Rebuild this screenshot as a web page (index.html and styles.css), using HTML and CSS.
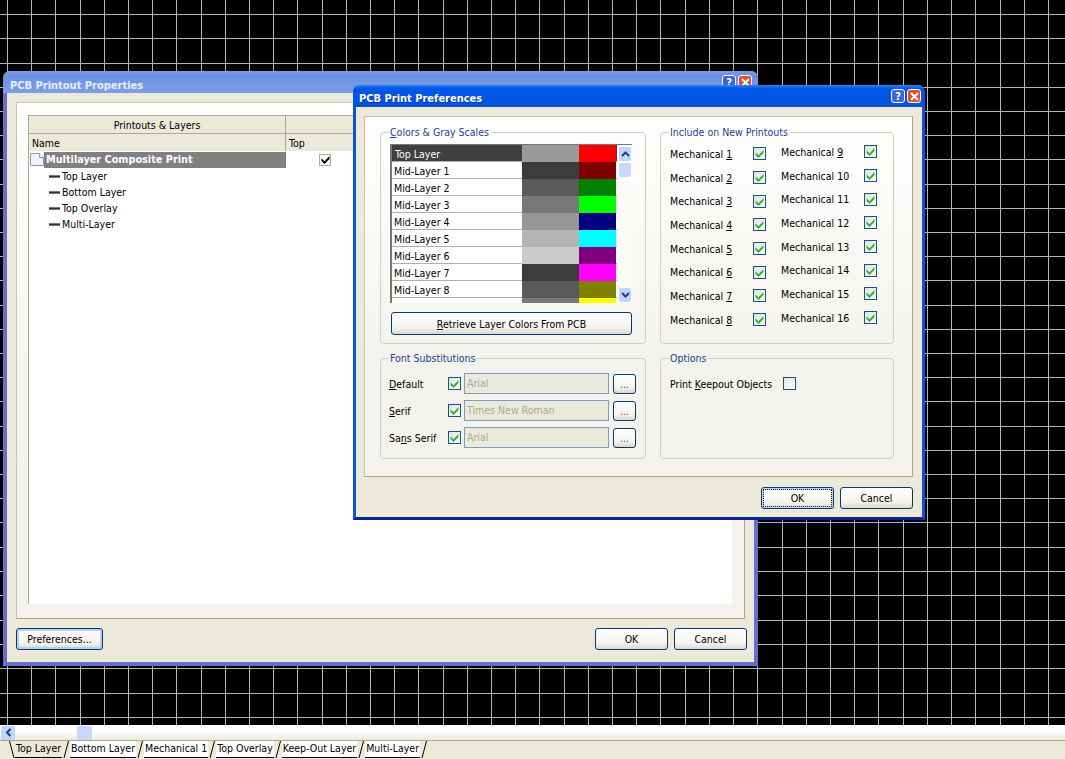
FILE: index.html
```html
<!DOCTYPE html>
<html>
<head>
    <meta charset="utf-8">
    <title>PCB Print Preferences</title>
    <link rel="stylesheet" href="styles.css">
</head>
<body>
    <svg width="0" height="0" class="defs">
        <symbol id="check" viewBox="0 0 9 9"><path d="M.5 3.500l3 2.800L8.500 1v3L3.500 9 .5 6z" fill="currentColor"/></symbol>
    </svg>

    <main class="canvas">
        <svg class="grid" width="1065" height="725">
            <path d="M7.5 0V725M31.5 0V725M55.5 0V725M80.5 0V725M104.5 0V725M128.5 0V725M152.5 0V725M176.5 0V725M201.5 0V725M225.5 0V725M249.5 0V725M273.5 0V725M297.5 0V725M322.5 0V725M346.5 0V725M370.5 0V725M394.5 0V725M418.5 0V725M443.5 0V725M467.5 0V725M491.5 0V725M515.5 0V725M539.5 0V725M564.5 0V725M588.5 0V725M612.5 0V725M636.5 0V725M660.5 0V725M685.5 0V725M709.5 0V725M733.5 0V725M757.5 0V725M782.5 0V725M806.5 0V725M830.5 0V725M854.5 0V725M878.5 0V725M903.5 0V725M927.5 0V725M951.5 0V725M975.5 0V725M1000.5 0V725M1024.5 0V725M1048.5 0V725" stroke="#b4b4b0" fill="none"/>
            <path d="M0 14.5H1065M0 38.5H1065M0 63.5H1065M0 87.5H1065M0 111.5H1065M0 135.5H1065M0 159.5H1065M0 184.5H1065M0 208.5H1065M0 232.5H1065M0 256.5H1065M0 280.5H1065M0 305.5H1065M0 329.5H1065M0 353.5H1065M0 377.5H1065M0 401.5H1065M0 426.5H1065M0 450.5H1065M0 474.5H1065M0 498.5H1065M0 522.5H1065M0 547.5H1065M0 571.5H1065M0 595.5H1065M0 620.5H1065M0 644.5H1065M0 668.5H1065M0 693.5H1065M0 717.5H1065" stroke="#b4b4b0" fill="none"/>
        </svg>

        <section class="window window-back">
            <header class="titlebar">
                <h1>PCB Printout Properties</h1>
                <div class="title-buttons">
                    <span class="title-btn -help">?</span>
                    <span class="title-btn -close"><svg width="9" height="9" viewBox="0 0 9 9"><path d="M1 1l7 7M8 1L1 8" stroke="#fff" stroke-width="2"/></svg></span>
                </div>
            </header>
            <div class="window-body">
                <div class="panel panel-tree">
                    <div class="tree">
                        <div class="tree-head">
                            <div class="head-cell -center">Printouts &amp; Layers</div>
                            <div class="head-cell"></div>
                            <div class="head-cell">Name</div>
                            <div class="head-cell">Top</div>
                        </div>
                        <div class="tree-row -print">
                            <svg class="doc-icon" width="14" height="13" viewBox="0 0 14 13"><path d="M.5.5h9l4 4v8H.5z" fill="#eef2fa" stroke="#8f99ad"/><path d="M9.500.5v4h4" fill="#fff" stroke="#8f99ad"/></svg>
                            <span class="print-name">Multilayer Composite Print</span>
                            <span class="top-check"><svg width="9" height="9"><use href="#check"/></svg></span>
                        </div>
                        <div class="tree-row"><i class="layer-dash"></i>Top Layer</div>
                        <div class="tree-row"><i class="layer-dash"></i>Bottom Layer</div>
                        <div class="tree-row"><i class="layer-dash"></i>Top Overlay</div>
                        <div class="tree-row"><i class="layer-dash"></i>Multi-Layer</div>
                    </div>
                </div>
                <footer class="window-foot">
                    <button class="btn -default btn-prefs">Preferences...</button>
                    <span class="spacer"></span>
                    <button class="btn">OK</button>
                    <button class="btn">Cancel</button>
                </footer>
            </div>
        </section>

        <section class="window window-front">
            <header class="titlebar">
                <h1>PCB Print Preferences</h1>
                <div class="title-buttons">
                    <span class="title-btn -help">?</span>
                    <span class="title-btn -close"><svg width="9" height="9" viewBox="0 0 9 9"><path d="M1 1l7 7M8 1L1 8" stroke="#fff" stroke-width="2"/></svg></span>
                </div>
            </header>
            <div class="window-body">
                <div class="panel panel-prefs">
                    <fieldset class="group group-colors">
                        <legend><u>C</u>olors &amp; Gray Scales</legend>
                        <div class="layer-list">
                            <div class="layer-rows">
                                <div class="layer-row -selected"><span class="layer-name">Top Layer</span><span class="g-top"></span><span class="c-red"></span></div>
                                <div class="layer-row"><span class="layer-name">Mid-Layer 1</span><span class="g-1"></span><span class="c-maroon"></span></div>
                                <div class="layer-row"><span class="layer-name">Mid-Layer 2</span><span class="g-2"></span><span class="c-green"></span></div>
                                <div class="layer-row"><span class="layer-name">Mid-Layer 3</span><span class="g-3"></span><span class="c-lime"></span></div>
                                <div class="layer-row"><span class="layer-name">Mid-Layer 4</span><span class="g-4"></span><span class="c-navy"></span></div>
                                <div class="layer-row"><span class="layer-name">Mid-Layer 5</span><span class="g-5"></span><span class="c-cyan"></span></div>
                                <div class="layer-row"><span class="layer-name">Mid-Layer 6</span><span class="g-6"></span><span class="c-purple"></span></div>
                                <div class="layer-row"><span class="layer-name">Mid-Layer 7</span><span class="g-1"></span><span class="c-magenta"></span></div>
                                <div class="layer-row"><span class="layer-name">Mid-Layer 8</span><span class="g-2"></span><span class="c-olive"></span></div>
                                <div class="layer-row"><span class="layer-name">Mid-Layer 9</span><span class="g-3"></span><span class="c-yellow"></span></div>
                            </div>
                            <div class="list-scroll">
                                <span class="scroll-btn"><svg width="9" height="6" viewBox="0 0 9 6"><path d="M1 5l3.500-3.500L8 5" fill="none" stroke="#1c3f94" stroke-width="2"/></svg></span>
                                <span class="scroll-thumb"></span>
                                <span class="scroll-btn -end"><svg width="9" height="6" viewBox="0 0 9 6"><path d="M1 1l3.500 3.500L8 1" fill="none" stroke="#1c3f94" stroke-width="2"/></svg></span>
                            </div>
                        </div>
                        <button class="btn btn-retrieve"><u>R</u>etrieve Layer Colors From PCB</button>
                    </fieldset>

                    <fieldset class="group group-include">
                        <legend>Include on New Printouts</legend>
                        <div class="mech-columns">
                            <div class="mech-col">
                                <label class="mech"><span>Mechanical <u>1</u></span><span class="check"><svg width="9" height="9"><use href="#check"/></svg></span></label>
                                <label class="mech"><span>Mechanical <u>2</u></span><span class="check"><svg width="9" height="9"><use href="#check"/></svg></span></label>
                                <label class="mech"><span>Mechanical <u>3</u></span><span class="check"><svg width="9" height="9"><use href="#check"/></svg></span></label>
                                <label class="mech"><span>Mechanical <u>4</u></span><span class="check"><svg width="9" height="9"><use href="#check"/></svg></span></label>
                                <label class="mech"><span>Mechanical <u>5</u></span><span class="check"><svg width="9" height="9"><use href="#check"/></svg></span></label>
                                <label class="mech"><span>Mechanical <u>6</u></span><span class="check"><svg width="9" height="9"><use href="#check"/></svg></span></label>
                                <label class="mech"><span>Mechanical <u>7</u></span><span class="check"><svg width="9" height="9"><use href="#check"/></svg></span></label>
                                <label class="mech"><span>Mechanical <u>8</u></span><span class="check"><svg width="9" height="9"><use href="#check"/></svg></span></label>
                            </div>
                            <div class="mech-col -right">
                                <label class="mech"><span>Mechanical <u>9</u></span><span class="check"><svg width="9" height="9"><use href="#check"/></svg></span></label>
                                <label class="mech"><span>Mechanical 10</span><span class="check"><svg width="9" height="9"><use href="#check"/></svg></span></label>
                                <label class="mech"><span>Mechanical 11</span><span class="check"><svg width="9" height="9"><use href="#check"/></svg></span></label>
                                <label class="mech"><span>Mechanical 12</span><span class="check"><svg width="9" height="9"><use href="#check"/></svg></span></label>
                                <label class="mech"><span>Mechanical 13</span><span class="check"><svg width="9" height="9"><use href="#check"/></svg></span></label>
                                <label class="mech"><span>Mechanical 14</span><span class="check"><svg width="9" height="9"><use href="#check"/></svg></span></label>
                                <label class="mech"><span>Mechanical 15</span><span class="check"><svg width="9" height="9"><use href="#check"/></svg></span></label>
                                <label class="mech"><span>Mechanical 16</span><span class="check"><svg width="9" height="9"><use href="#check"/></svg></span></label>
                            </div>
                        </div>
                    </fieldset>

                    <fieldset class="group group-fonts">
                        <legend>Font Substitutions</legend>
                        <div class="font-row">
                            <span class="font-label"><u>D</u>efault</span>
                            <span class="check"><svg width="9" height="9"><use href="#check"/></svg></span>
                            <span class="font-input">Arial</span>
                            <button class="btn btn-dots">...</button>
                        </div>
                        <div class="font-row">
                            <span class="font-label"><u>S</u>erif</span>
                            <span class="check"><svg width="9" height="9"><use href="#check"/></svg></span>
                            <span class="font-input">Times New Roman</span>
                            <button class="btn btn-dots">...</button>
                        </div>
                        <div class="font-row">
                            <span class="font-label">Sa<u>n</u>s Serif</span>
                            <span class="check"><svg width="9" height="9"><use href="#check"/></svg></span>
                            <span class="font-input">Arial</span>
                            <button class="btn btn-dots">...</button>
                        </div>
                    </fieldset>

                    <fieldset class="group group-options">
                        <legend>Options</legend>
                        <label class="option"><span>Print <u>K</u>eepout Objects</span><span class="check -empty"></span></label>
                    </fieldset>
                </div>
                <footer class="window-foot">
                    <span class="spacer"></span>
                    <button class="btn -focused">OK</button>
                    <button class="btn">Cancel</button>
                </footer>
            </div>
        </section>
    </main>

    <div class="hscroll">
        <span class="hscroll-btn"><svg width="7" height="9" viewBox="0 0 7 9"><path d="M5.500 1L2 4.500 5.500 8" fill="none" stroke="#1c3f94" stroke-width="2"/></svg></span>
        <span class="hscroll-thumb"></span>
    </div>

    <nav class="tabs">
        <svg class="slant" width="6" height="18"><path d="M.5 0L5 17" stroke="#000" fill="none"/></svg>
        <span class="tab -active">Top Layer</span>
        <svg class="slant" width="8" height="18"><path d="M6.500 0L2 17" stroke="#000" fill="none"/></svg>
        <span class="tab">Bottom Layer</span>
        <svg class="slant" width="8" height="18"><path d="M6.500 0L2 17" stroke="#000" fill="none"/></svg>
        <span class="tab">Mechanical 1</span>
        <svg class="slant" width="8" height="18"><path d="M6.500 0L2 17" stroke="#000" fill="none"/></svg>
        <span class="tab">Top Overlay</span>
        <svg class="slant" width="8" height="18"><path d="M6.500 0L2 17" stroke="#000" fill="none"/></svg>
        <span class="tab">Keep-Out Layer</span>
        <svg class="slant" width="8" height="18"><path d="M6.500 0L2 17" stroke="#000" fill="none"/></svg>
        <span class="tab">Multi-Layer</span>
        <svg class="slant" width="8" height="18"><path d="M6.500 0L2 17" stroke="#000" fill="none"/></svg>
    </nav>
</body>
</html>
```

FILE: styles.css
```css
* { box-sizing: border-box; }

:root {
    --face: #ece9d8;
    --line: #aca899;
    --ui-font: "DejaVu Sans Condensed", "DejaVu Sans", sans-serif;
}

body {
    margin: 0;
    height: 100vh;
    overflow: hidden;
    display: flex;
    flex-direction: column;
    font-family: var(--ui-font);
    font-size: 10.5px;
    color: #000;
    background: var(--face);
}

.defs { position: absolute; }

button { font: inherit; color: inherit; padding: 0; }

.canvas {
    position: relative;
    height: 725px;
    flex: none;
    background: #000;
    overflow: hidden;
}

.grid { position: absolute; left: 0; top: 0; }

/* windows */
.window {
    position: absolute;
    display: flex;
    flex-direction: column;
    background: var(--face);
    border-radius: 7px 7px 0 0;
    border: 4px solid;
    border-top: 0;
}

.window-back {
    left: 3px;
    top: 71px;
    width: 755px;
    height: 595px;
    border-color: #6670cc;
}

.window-front {
    left: 353px;
    top: 85px;
    width: 572px;
    height: 435px;
    border-width: 3px;
    border-color: #0a55dd;
    border-bottom-color: #08268f;
}

.titlebar {
    display: flex;
    align-items: center;
    margin: 0 -4px;
    padding: 6px 6px 0 7px;
    height: 22px;
    flex: none;
    border-radius: 7px 7px 0 0;
}

.window-back .titlebar {
    background: linear-gradient(#7f9ee6, #6b90e0 20%, #7ba0e8);
}

.window-front .titlebar {
    margin: 0 -3px;
    padding: 4px 4px 0 6px;
    background: linear-gradient(#2f86f5, #0058e8 16%, #0054e3 70%, #0a4fd0);
}

.titlebar h1 {
    margin: 0;
    font-size: 11px;
    font-weight: bold;
    color: #fff;
    text-shadow: 1px 1px #0f3a9c;
}

.window-back .titlebar h1 { color: #e6edfb; text-shadow: none; }

.title-buttons { margin-left: auto; display: flex; gap: 2px; }

.title-btn {
    width: 14px;
    height: 14px;
    display: flex;
    align-items: center;
    justify-content: center;
    border: 1px solid #fff;
    border-radius: 3px;
    color: #fff;
    font-weight: bold;
    font-size: 11px;
}

.window-front .title-buttons { margin-top: -4px; }
.window-back .title-buttons { margin-top: -6px; }

.title-btn.-help { background: #3d66dd; }
.title-btn.-close { background: #d9532c; }

.window-body {
    flex: 1;
    display: flex;
    flex-direction: column;
    min-height: 0;
}

.window-back .window-body { padding: 9px 7px 12px 9px; }
.window-front .window-body { padding: 9px 9px 8px 8px; }

.panel {
    border: 1px solid #a7a493;
    border-top-color: #c9c6b6;
    border-left-color: #c9c6b6;
    background: linear-gradient(#fff, #f3f2ec 70%, #f3f2ed);
}

.window-back .panel { margin-right: 2px; }

.window-foot {
    display: flex;
    gap: 6px;
    flex: none;
}

.window-back .window-foot { margin-top: 9px; }
.window-front .window-foot { margin-top: 10px; }

.spacer { flex: 1; }

/* buttons */
.btn {
    width: 73px;
    height: 22px;
    border: 1px solid #003c74;
    border-radius: 3px;
    background: linear-gradient(#fff, #f4f3ee 70%, #dcd8cc);
}

.btn.-default {
    box-shadow: inset 0 0 0 2px #b4cff3;
}

.btn.-focused {
    outline: 1px dotted #222;
    outline-offset: -3px;
    box-shadow: inset 0 0 0 2px #c0d3ef;
}

.btn-prefs { width: 87px; }
.btn-retrieve { width: 241px; height: 23px; margin-left: 10px; display: block; }
.btn-dots { width: 23px; height: 20px; color: #555; }

/* printouts tree */
.panel-tree {
    flex: 1;
    padding: 12px 12px 14px 11px;
    display: flex;
}

.tree {
    flex: 1;
    background: #fff;
    border-left: 1px solid var(--line);
}

.tree-head {
    display: grid;
    grid-template-columns: 257px 1fr;
    grid-auto-rows: 18px;
}

.head-cell {
    background: var(--face);
    border-top: 1px solid var(--line);
    border-right: 1px solid var(--line);
    padding: 0 3px;
    line-height: 18px;
}

.head-cell.-center { text-align: center; }

.tree-row {
    display: flex;
    align-items: center;
    height: 16px;
    padding-left: 20px;
    gap: 2px;
}

.tree-row.-print {
    padding-left: 1px;
    height: 17px;
    gap: 0;
}

.doc-icon { flex: none; }

.print-name {
    width: 242px;
    height: 16px;
    line-height: 16px;
    background: #808080;
    color: #fff;
    font-size: 10.8px;
    font-weight: bold;
    padding-left: 2px;
    white-space: nowrap;
}

.top-check {
    width: 12px;
    height: 12px;
    margin-left: 33px;
    border: 1px solid #a9a9a9;
    display: flex;
    align-items: center;
    justify-content: center;
    color: #000;
}

.layer-dash {
    width: 11px;
    height: 3px;
    background: linear-gradient(#999, #333 50%, #999);
    flex: none;
}

/* preferences */
.panel-prefs {
    flex: 1;
    display: grid;
    grid-template-columns: 266px 234px;
    grid-template-rows: 219px 108px;
    column-gap: 14px;
    row-gap: 7px;
    padding: 8px 0 0 15px;
}

.group {
    margin: 0;
    min-width: 0;
    border: 1px solid #d0d0bf;
    border-radius: 4px;
    padding: 0;
}

.group legend {
    color: #1c3f94;
    padding: 0 2px 0 1px;
    margin-left: 8px;
    line-height: 14px;
}

.layer-list {
    display: flex;
    margin: 5px 0 9px 9px;
    width: 242px;
    height: 159px;
    border-left: 2px solid #777;
    border-top: 1px solid #777;
    background: #fff;
}

.layer-rows {
    width: 225px;
    overflow: hidden;
}

.layer-row {
    display: grid;
    grid-template-columns: 130px 57px 37px;
    height: 17px;
    border-bottom: 1px solid #b0b0b0;
}

.layer-row .layer-name {
    line-height: 18px;
    padding-left: 2px;
}

.layer-row.-selected { background: #404040; color: #fff; }
.layer-row.-selected .layer-name { padding-left: 3px; }

.g-top { background: #9a9a9a; }
.g-1 { background: #3c3c3c; }
.g-2 { background: #5a5a5a; }
.g-3 { background: #787878; }
.g-4 { background: #969696; }
.g-5 { background: #b4b4b4; }
.g-6 { background: #cccccc; }

.c-red { background: #ff0000; }
.c-maroon { background: #800000; }
.c-green { background: #008000; }
.c-lime { background: #00ff00; }
.c-navy { background: #000080; }
.c-cyan { background: #00ffff; }
.c-purple { background: #800080; }
.c-magenta { background: #ff00ff; }
.c-olive { background: #808000; }
.c-yellow { background: #ffff00; }

.list-scroll {
    flex: 1;
    display: flex;
    flex-direction: column;
    background: #fbfbf8;
    padding: 1px 0 0 1px;
}

.scroll-btn {
    height: 16px;
    flex: none;
    background: #c3d4fa;
    border: 1px solid #fff;
    border-radius: 3px;
    display: flex;
    align-items: center;
    justify-content: center;
}

.scroll-btn.-end { margin-top: auto; }

.scroll-thumb {
    height: 16px;
    flex: none;
    background: #c8d7fb;
    border: 1px solid #fff;
    border-radius: 3px;
}

.check {
    width: 13px;
    height: 13px;
    flex: none;
    display: flex;
    align-items: center;
    justify-content: center;
    border: 1px solid #1c5180;
    background: linear-gradient(135deg, #dce4de, #fff);
    color: #2db52d;
}

.mech-columns {
    display: grid;
    grid-template-columns: 111px 100px;
    padding: 3px 0 0 9px;
}

.mech-col { display: grid; grid-auto-rows: 23.7px; }
.mech-col.-right { margin-top: -2px; }

.mech {
    display: flex;
    align-items: center;
    justify-content: space-between;
    width: 96px;
}

.font-row {
    display: flex;
    align-items: center;
    height: 27px;
    padding-left: 8px;
}

.font-row:first-of-type { margin-top: 5px; }

.font-label { width: 59px; }

.font-input {
    width: 145px;
    height: 21px;
    margin: 0 4px 0 3px;
    padding-left: 2px;
    line-height: 18px;
    background: #ebe9dc;
    border: 1px solid #7f9db9;
    color: #aca899;
}

.option {
    display: flex;
    align-items: center;
    gap: 11px;
    padding: 12px 0 0 9px;
}

/* bottom strip */
.hscroll {
    height: 16px;
    flex: none;
    display: flex;
    align-items: center;
    background: linear-gradient(#fff, #fdfdfb 50%, #ece9d8);
    border-bottom: 1px solid var(--line);
    padding-left: 1px;
}

.hscroll-btn {
    width: 14px;
    height: 14px;
    background: #c3d4fa;
    border-radius: 2px;
    display: flex;
    align-items: center;
    justify-content: center;
}

.hscroll-thumb {
    width: 15px;
    height: 14px;
    margin-left: 62px;
    background: #c8d7fb;
    border-radius: 2px;
}

.tabs {
    flex: 1;
    display: flex;
    align-items: flex-start;
    padding-left: 9px;
}

.slant { flex: none; display: block; }

.tab {
    height: 17px;
    line-height: 15px;
    padding: 0 1px;
    border-bottom: 1px solid #000;
    background: #fff;
    white-space: nowrap;
}

.tab.-active { background: var(--face); }
```
